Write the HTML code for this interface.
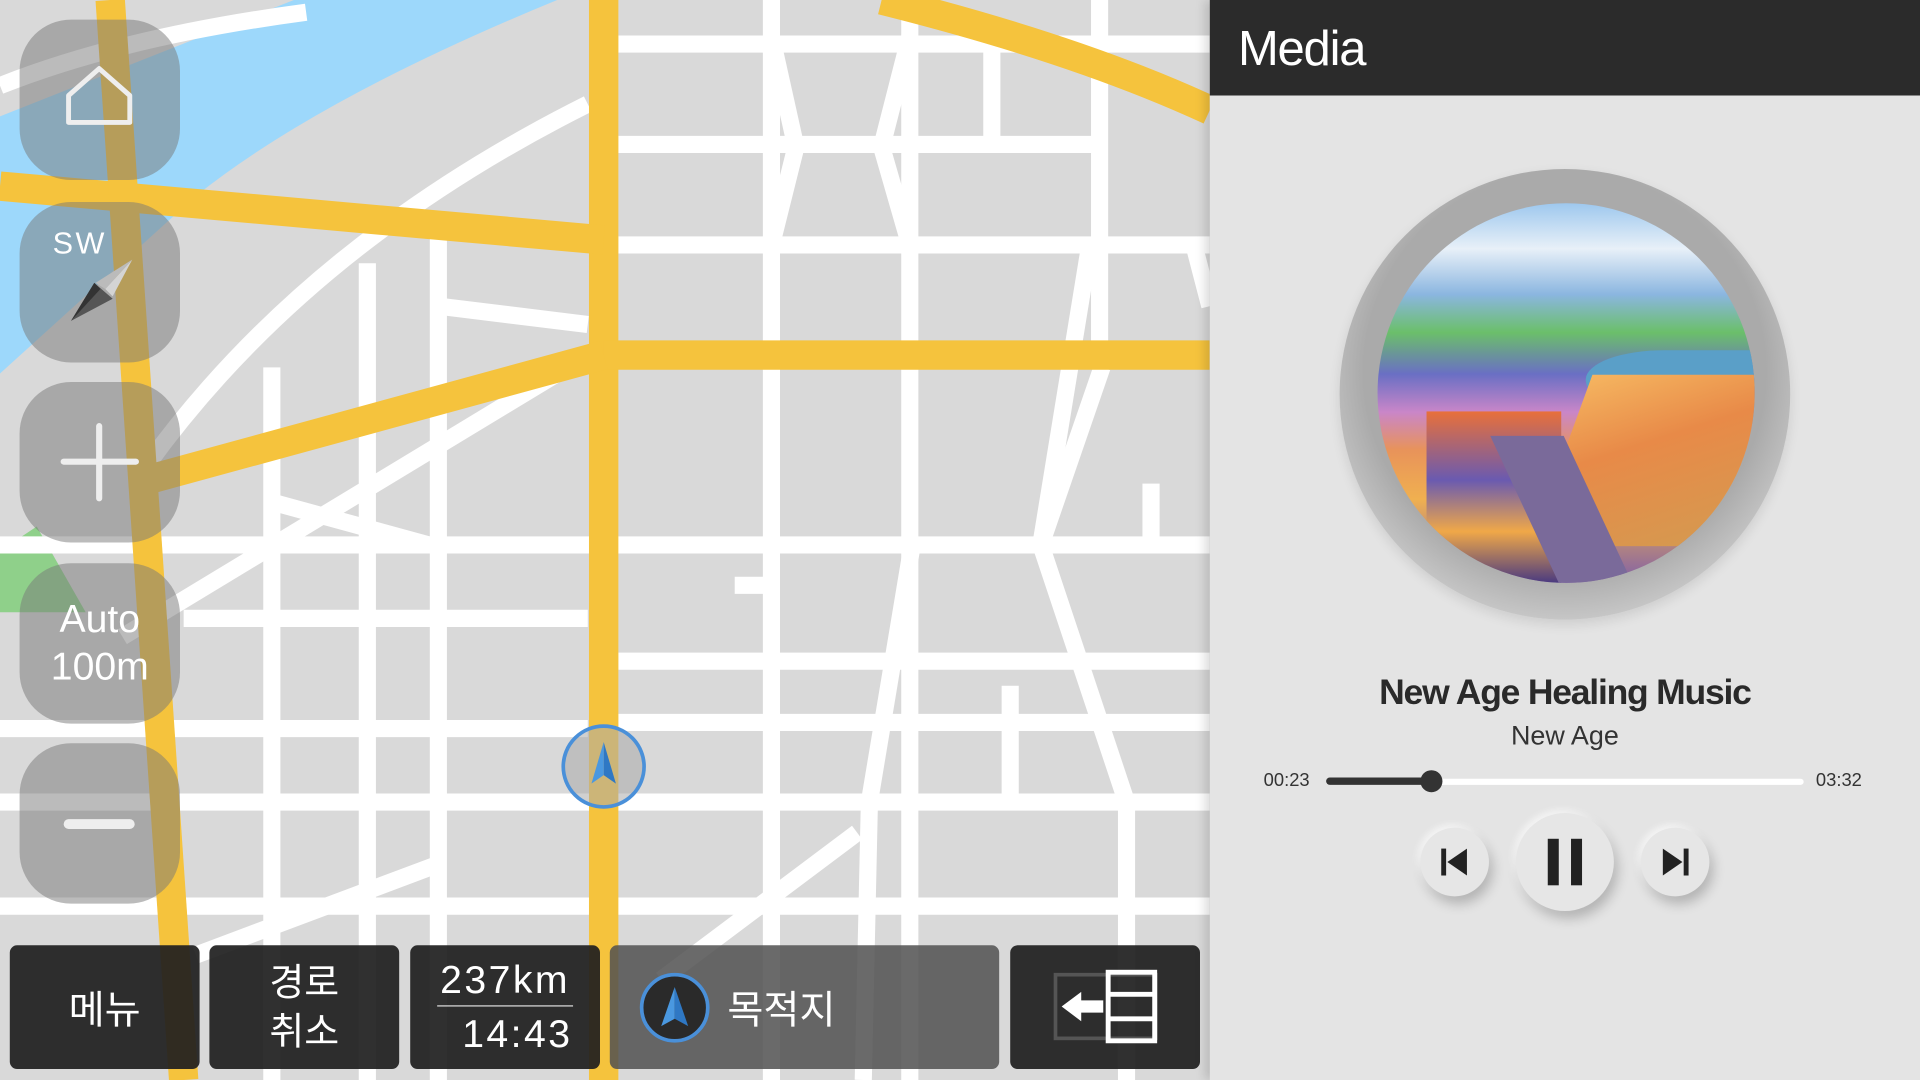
<!DOCTYPE html>
<html><head><meta charset="utf-8"><style>
html,body{margin:0;padding:0;width:1920px;height:1080px;overflow:hidden;background:#d9d9d9}
#s{position:absolute;left:0;top:0;width:1568px;height:882px;transform:scale(1.22449);transform-origin:0 0;font-family:"Liberation Sans","Noto Sans CJK KR",sans-serif}
.btn{position:absolute;left:16px;width:131px;height:131px;border-radius:42px;background:rgba(120,120,120,.5);color:#fff}
.bb{position:absolute;top:772px;height:101px;background:rgba(30,30,30,.92);border-radius:6px;color:#fff;display:flex;align-items:center;justify-content:center;text-align:center}
.cb{position:absolute;border-radius:50%;background:#e6e6e6;box-shadow:3px 6px 10px rgba(0,0,0,.22),-2px -2px 6px rgba(255,255,255,.8)}
</style></head><body><div id="s">
<svg width="988" height="882" style="position:absolute;left:0;top:0">
<rect width="988" height="882" fill="#d9d9d9"/>
<path d="M0,95 L240,0 L455,0 Q260,80 160,160 L0,305 Z" fill="#9dd8fb"/>
<path d="M0,450 L30,430 L70,500 L0,500Z" fill="#8fd08a"/>
<g stroke="#fff" stroke-width="14" fill="none">
<path d="M0,70 Q100,30 250,10"/>
<path d="M120,380 Q250,200 480,85"/>
<path d="M100,520 L480,290"/>
<line x1="630" y1="0" x2="630" y2="882"/>
<line x1="743" y1="0" x2="743" y2="882"/>
<line x1="898" y1="0" x2="898" y2="300"/>
<line x1="358" y1="195" x2="358" y2="882"/>
<line x1="222" y1="300" x2="222" y2="882"/>
<line x1="300" y1="215" x2="300" y2="882"/>
<line x1="505" y1="36" x2="988" y2="36"/>
<line x1="505" y1="118" x2="900" y2="118"/>
<line x1="505" y1="200" x2="988" y2="200"/>
<line x1="358" y1="250" x2="480" y2="265"/>
<line x1="222" y1="410" x2="350" y2="445"/>
<line x1="0" y1="445" x2="988" y2="445"/>
<line x1="150" y1="505" x2="480" y2="505"/>
<line x1="0" y1="595" x2="480" y2="595"/>
<line x1="505" y1="540" x2="988" y2="540"/>
<line x1="0" y1="655" x2="988" y2="655"/>
<line x1="505" y1="590" x2="988" y2="590"/>
<line x1="0" y1="740" x2="988" y2="740"/>
<path d="M630,30 L650,120 L630,200"/>
<path d="M743,30 L720,120 L743,200"/>
<path d="M810,36 L810,118"/>
<path d="M900,300 L850,445 L920,655"/>
<path d="M975,200 L988,250"/>
<path d="M890,200 L850,445"/>
<path d="M745,445 L710,655 L705,882"/>
<path d="M825,560 L825,655"/>
<path d="M920,655 L920,882"/>
<path d="M940,395 L940,445"/>
<path d="M600,478 L630,478"/>
<path d="M360,705 L160,780"/>
<path d="M700,680 L540,800"/>
</g>
<g stroke="#f5c33d" stroke-width="24" fill="none">
<line x1="493" y1="0" x2="493" y2="882"/>
<line x1="493" y1="290" x2="988" y2="290"/>
<line x1="0" y1="152" x2="493" y2="196"/>
<line x1="120" y1="392" x2="493" y2="290"/>
<path d="M720,0 Q880,40 988,90"/>
<line x1="90" y1="0" x2="150" y2="882"/>
</g>
<circle cx="493" cy="626" r="33" fill="rgba(170,170,170,.55)" stroke="#4a90d9" stroke-width="3"/>
<path d="M493,606 L503,640 L493,633Z" fill="#2f78c4"/><path d="M493,606 L483,640 L493,633Z" fill="#4a98e0"/>
</svg>
<div class="btn" style="top:16px"><svg width="131" height="131"><path d="M40,84 V62 L65,40 L90,62 V84 Z" fill="none" stroke="#eee" stroke-width="4" stroke-linejoin="round"/></svg></div>
<div class="btn" style="top:165px"><div style="position:absolute;left:27px;top:20px;font-size:25px;letter-spacing:2px">SW</div><svg width="131" height="131"><path d="M92,47 L76,77 L70,71Z" fill="#d4d4d4"/><path d="M92,47 L70,71 L62,66Z" fill="#bbb"/><path d="M42,97 L61,66 L76,79Z" fill="#555"/><path d="M42,97 L61,66 L66,71Z" fill="#333"/></svg></div>
<div class="btn" style="top:312px"><svg width="131" height="131"><path d="M65,36 V95 M36,65 H95" stroke="#eee" stroke-width="5" stroke-linecap="round"/></svg></div>
<div class="btn" style="top:460px;text-align:center;font-size:32px;line-height:39px;padding-top:26px;box-sizing:border-box">Auto<br>100m</div>
<div class="btn" style="top:607px"><div style="position:absolute;left:36px;top:62px;width:58px;height:8px;border-radius:4px;background:#eee"></div></div>
<div class="bb" style="left:8px;width:155px;font-size:32px">메뉴</div>
<div class="bb" style="left:171px;width:155px;font-size:31px;line-height:40px">경로<br>취소</div>
<div class="bb" style="left:335px;width:155px;flex-direction:column;font-size:32px;letter-spacing:2px"><div style="border-bottom:1px solid #ddd;line-height:42px;padding:0 2px">237km</div><div style="line-height:44px;padding-left:20px">14:43</div></div>
<div class="bb" style="left:498px;width:318px;background:rgba(80,80,80,.85);justify-content:flex-start"><svg width="70" height="70" style="margin-left:20px"><circle cx="33" cy="35" r="27" fill="#2a2a2a" stroke="#4a90d9" stroke-width="3"/><path d="M33,18 L44,50 L33,44Z" fill="#2f78c4"/><path d="M33,18 L22,50 L33,44Z" fill="#4a98e0"/></svg><span style="font-size:32px;margin-left:6px">목적지</span></div>
<div class="bb" style="left:825px;width:155px"><svg width="100" height="70"><rect x="9" y="8" width="82" height="52" fill="none" stroke="#555" stroke-width="3"/><rect x="52" y="6" width="38" height="56" fill="none" stroke="#fff" stroke-width="4"/><path d="M52,24 H90 M52,44 H90" stroke="#fff" stroke-width="4"/><path d="M14,34 L30,22 V29 H48 V39 H30 V46Z" fill="#fff"/></svg></div>
<div style="position:absolute;left:988px;top:0;width:580px;height:882px;background:#e4e4e4;box-shadow:-4px 0 8px rgba(0,0,0,.15)">
<div style="height:78px;background:#2b2b2b;color:#fff;font-size:40px;line-height:80px;padding-left:23px;letter-spacing:-1px">Media</div>
<div style="position:absolute;left:106px;top:138px;width:368px;height:368px;border-radius:50%;background:radial-gradient(circle at 50% 45%,#aaa 60%,#c8c8c8 75%,#d4d4d4 100%);box-shadow:0 4px 10px rgba(0,0,0,.1)"></div>
<div style="position:absolute;left:137px;top:166px;width:308px;height:310px;border-radius:50%;overflow:hidden;background:linear-gradient(180deg,#9ec8ee 0%,#e8f0f8 12%,#8bb6e0 24%,#6bbf6a 34%,#6a6fc4 45%,#c986c8 55%,#e8935a 65%,#f0b050 78%,#8060a8 100%)">
<div style="position:absolute;left:170px;top:120px;width:160px;height:60px;background:#5a9fc8;border-radius:40% 0 0 60%"></div>
<div style="position:absolute;left:150px;top:140px;width:160px;height:140px;background:linear-gradient(160deg,#f5b560,#e88a48 40%,#d49a50);transform:skewX(-20deg)"></div>
<div style="position:absolute;left:40px;top:170px;width:110px;height:140px;background:linear-gradient(180deg,#e8703a,#6a5ab0 40%,#f0a848 70%,#4a3a80)"></div>
<div style="position:absolute;left:120px;top:190px;width:60px;height:120px;background:#7a6a9a;transform:skewX(25deg)"></div>
</div>
<div style="position:absolute;left:0;width:580px;top:550px;text-align:center;font-size:29px;font-weight:bold;color:#2a2a2a;letter-spacing:-1px">New Age Healing Music</div>
<div style="position:absolute;left:0;width:580px;top:588px;text-align:center;font-size:22px;color:#333">New Age</div>
<div style="position:absolute;left:44px;top:629px;font-size:15px;color:#333">00:23</div>
<div style="position:absolute;left:495px;top:629px;font-size:15px;color:#333">03:32</div>
<div style="position:absolute;left:95px;top:636px;width:390px;height:5px;border-radius:3px;background:#fff"></div>
<div style="position:absolute;left:95px;top:635px;width:86px;height:6px;border-radius:3px;background:#333"></div>
<div style="position:absolute;left:172px;top:629px;width:18px;height:18px;border-radius:50%;background:#333"></div>
<div class="cb" style="left:172px;top:676px;width:56px;height:56px"><svg width="56" height="56"><rect x="17" y="17" width="4" height="22" fill="#222"/><path d="M38,17 V39 L22,28Z" fill="#222"/></svg></div>
<div class="cb" style="left:250px;top:664px;width:80px;height:80px"><svg width="80" height="80"><rect x="26" y="21" width="9" height="38" fill="#222"/><rect x="45" y="21" width="9" height="38" fill="#222"/></svg></div>
<div class="cb" style="left:352px;top:676px;width:56px;height:56px"><svg width="56" height="56"><rect x="35" y="17" width="4" height="22" fill="#222"/><path d="M18,17 V39 L34,28Z" fill="#222"/></svg></div>
</div>
</div></body></html>
